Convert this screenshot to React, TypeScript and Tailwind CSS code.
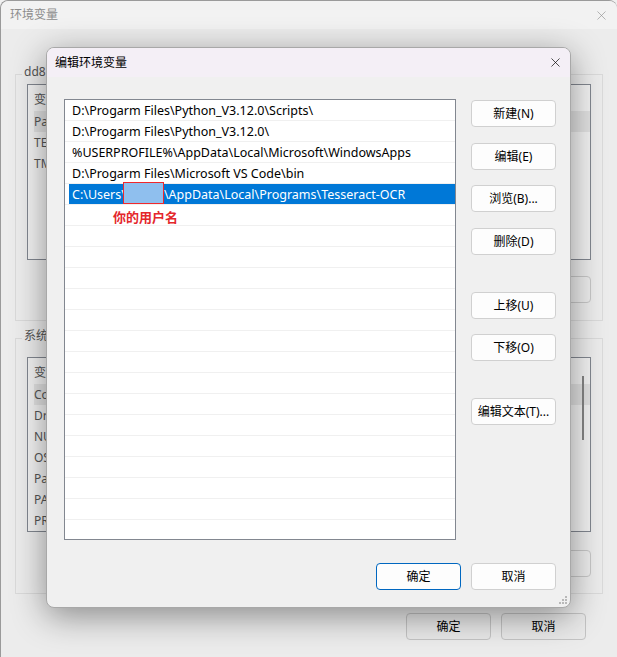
import { X } from 'lucide-react';

const FONT = "font-['Noto_Sans','Noto_Sans_CJK_SC',sans-serif]";

const paths = [
  'D:\\Progarm Files\\Python_V3.12.0\\Scripts\\',
  'D:\\Progarm Files\\Python_V3.12.0\\',
  '%USERPROFILE%\\AppData\\Local\\Microsoft\\WindowsApps',
  'D:\\Progarm Files\\Microsoft VS Code\\bin',
];

const sideButtons = [
  { label: '新建(N)', gap: 'mt-0' },
  { label: '编辑(E)', gap: 'mt-[16px]' },
  { label: '浏览(B)...', gap: 'mt-[15px]' },
  { label: '删除(D)', gap: 'mt-[16px]' },
  { label: '上移(U)', gap: 'mt-[37px]' },
  { label: '下移(O)', gap: 'mt-[15px]' },
  { label: '编辑文本(T)...', gap: 'mt-[37px]' },
];

function WinButton({ label, primary, className = '' }: { label: string; primary?: boolean; className?: string }) {
  return (
    <button
      className={`w-[85px] h-[27px] rounded-[4px] text-[12px] text-black flex items-center justify-center ${
        primary ? 'bg-[#fdfdfd] border border-[#0067c0]' : 'bg-[#fdfdfd] border border-[#d0d0d0]'
      } ${className}`}
    >
      {label}
    </button>
  );
}

// background window list (mostly hidden behind the dialog)
function BgList({ rows, header, height, highlight }: { rows: string[]; header: string; height: string; highlight?: number }) {
  return (
    <div className={`mx-[11px] ${height} border border-[#828790] bg-[#f3f3f3] flex`}>
      <div className="flex-1 pl-[6px] pt-[4px]">
        <div className="h-[22px] flex items-center text-[12px] text-[#555]">{header}</div>
        {rows.map((r, i) => (
          <div
            key={i}
            className={`h-[21px] flex items-center text-[12px] text-[#555] ${i === highlight ? 'bg-[#e2e2e2]' : ''}`}
          >
            {r}
          </div>
        ))}
      </div>
    </div>
  );
}

function BackgroundWindow() {
  return (
    <div className="w-full h-full flex flex-col bg-[#ececec] rounded-t-[8px] border-l border-t border-[#9a9a9a]">
      <div className="h-[28px] flex items-center justify-between pl-[9px] pr-[8px] bg-[#f2f2f2] rounded-t-[8px]">
        <span className="text-[12px] text-[#8c8c8c]">环境变量</span>
        <X className="w-[15px] h-[15px] text-[#8c8c8c]" strokeWidth={1} />
      </div>

      {/* user variables */}
      <div className="relative mx-[14px] mt-[45px] h-[247px] border border-[#dadada]">
        <span className="absolute left-[6px] -top-[9px] bg-[#ececec] px-[2px] text-[12px] text-[#555] leading-none">dd8</span>
        <div className="pt-[9px]">
          <BgList rows={['Pa', 'TE', 'TM']} header="变" height="h-[176px]" highlight={0} />
        </div>
        <div className="flex justify-end gap-[10px] pr-[11px] pt-[16px]">
          <div className="w-[85px] h-[27px] rounded-[4px] border border-[#c8c8c8] bg-[#ededed]" />
        </div>
      </div>

      {/* system variables */}
      <div className="relative mx-[14px] mt-[17px] h-[256px] border border-[#dadada]">
        <span className="absolute left-[6px] -top-[9px] bg-[#ececec] px-[2px] text-[12px] text-[#555] leading-none">系统</span>
        <div className="pt-[18px] relative">
          <BgList rows={['Co', 'Dr', 'NU', 'OS', 'Pa', 'PA', 'PR']} header="变" height="h-[175px]" highlight={0} />
          <div className="absolute right-[18px] top-[37px] w-[2px] h-[64px] bg-[#858585]" />
        </div>
        <div className="flex justify-end pr-[11px] pt-[18px]">
          <div className="w-[85px] h-[27px] rounded-[4px] border border-[#c8c8c8] bg-[#ededed]" />
        </div>
      </div>

      <div className="flex justify-end gap-[10px] pr-[31px] mt-[19px]">
        <WinButton label="确定" className="!bg-[#e9e9e9] !border-[#c4c4c4]" />
        <WinButton label="取消" className="!bg-[#e9e9e9] !border-[#c4c4c4]" />
      </div>
    </div>
  );
}

function Grip() {
  return (
    <svg width="8" height="8" viewBox="0 0 8 8" className="absolute right-[3px] bottom-[3px]">
      {[
        [6, 0],
        [3, 3],
        [6, 3],
        [0, 6],
        [3, 6],
        [6, 6],
      ].map(([x, y], i) => (
        <rect key={i} x={x} y={y} width="2" height="2" fill="#b8b8b8" />
      ))}
    </svg>
  );
}

function EditDialog() {
  const emptyRows = Array.from({ length: 15 });
  return (
    <div className="absolute left-[46px] top-[47px] w-[525px] h-[561px] rounded-[8px] bg-[#f0f0f0] border border-[#a8a8a8] shadow-[0_8px_34px_rgba(0,0,0,0.42)] flex flex-col overflow-hidden">
      <div className="h-[29px] bg-[#f4eff6] flex items-center justify-between pl-[8px] pr-[7px]">
        <span className="text-[12px] text-black">编辑环境变量</span>
        <X className="w-[15px] h-[15px] text-black" strokeWidth={1.1} />
      </div>

      <div className="flex pl-[17px] pt-[22px]">
        {/* path list */}
        <div className="w-[392px] h-[441px] border border-[#828790] bg-white overflow-hidden">
          {paths.map((p) => (
            <div key={p} className="h-[21px] border-b border-[#f0f0f0] flex items-center pt-[3px] pl-[7px] text-[12.5px] text-black whitespace-nowrap">
              {p}
            </div>
          ))}
          <div className="h-[21px] border-b border-[#f0f0f0] pl-[4px] flex">
            <div className="flex-1 bg-[#0078d7] flex items-center pt-[3px] pl-[3px] text-[12.5px] text-white whitespace-nowrap">
              C:\Users\
              <span className="relative -ml-[3px] inline-block w-[41px] h-[22px] -mt-[5px] bg-[#8fbfee] border border-[#f0282c]" />
              \AppData\Local\Programs\Tesseract-OCR
            </div>
          </div>
          <div className="h-[21px] border-b border-[#f0f0f0] flex items-center pt-[5px] pl-[48px] text-[13px] font-bold text-[#e4262b]">
            你的用户名
          </div>
          {emptyRows.map((_, i) => (
            <div key={i} className="h-[21px] border-b border-[#f0f0f0]" />
          ))}
        </div>

        {/* side buttons */}
        <div className="flex flex-col pl-[15px] pt-[1px]">
          {sideButtons.map((b) => (
            <WinButton key={b.label} label={b.label} className={b.gap} />
          ))}
        </div>
      </div>

      <div className="flex justify-end gap-[10px] pr-[14px] pt-[23px]">
        <WinButton label="确定" primary />
        <WinButton label="取消" />
      </div>
      <Grip />
    </div>
  );
}

export default function App() {
  return (
    <div className={`relative w-[617px] h-[657px] overflow-hidden bg-[#f0f0f0] ${FONT}`}>
      <BackgroundWindow />
      <EditDialog />
    </div>
  );
}
